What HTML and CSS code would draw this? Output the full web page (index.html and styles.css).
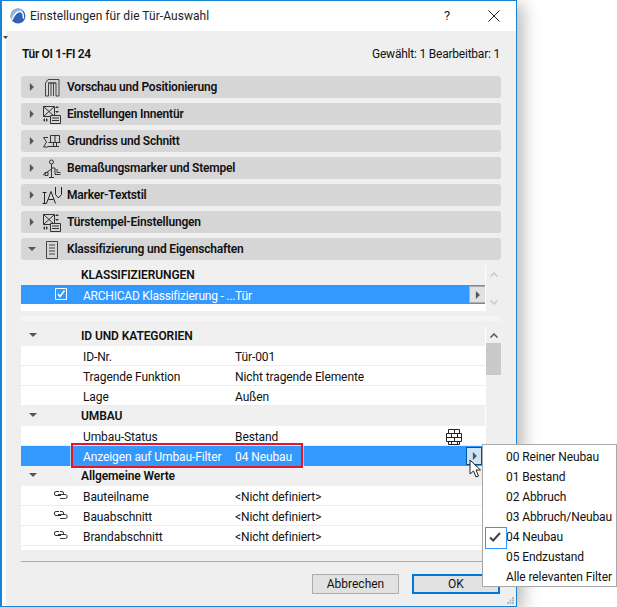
FILE: index.html
```html
<!DOCTYPE html>
<html lang="de">
<head>
<meta charset="utf-8">
<title>Einstellungen für die Tür-Auswahl</title>
<link rel="stylesheet" href="styles.css">
</head>
<body>
<svg class="defs" width="0" height="0">
  <symbol id="tri-r" viewBox="0 0 6 10"><path d="M1 0l5 5-5 5z" fill="#555"/></symbol>
  <symbol id="tri-d" viewBox="0 0 10 6"><path d="M0 0h10L5 5z" fill="#555"/></symbol>
  <symbol id="settings" viewBox="0 0 20 20"><g fill="none" stroke="#333" stroke-width="1"><path d="M1.500 1.500h11v10h-11zM1.500 1.500l11 10M12.500 1.500l-11 10"/><path d="M8.500 10.500h10v8h-10zM10 13h7M10 15.500h7" fill="#d6d6d6"/></g><path d="M15 1l2 2h-4zM15 8l2-2h-4zM1 15l2-2v4zM6 15l-2-2v4z" fill="#333"/></symbol>
  <symbol id="link" viewBox="0 0 14 8"><g fill="none" stroke="#333" stroke-width="1"><path d="M5 .5H2A1.500 1.500 0 0 0 .5 2v1A1.500 1.500 0 0 0 2 4.500h5"/><path d="M4 3.500h7A1.500 1.500 0 0 1 13 5v1a1.500 1.500 0 0 1-1.500 1.500H6"/><path d="M6 .5h2A1.500 1.500 0 0 1 9.500 2v1"/></g></symbol>
</svg>

<main class="window">
  <header class="titlebar">
    <svg class="app-logo" viewBox="0 0 16 16"><circle cx="8" cy="8" r="7.500" fill="#2f63b5"/><path d="M.5 8C1 4 4 .5 8 .5c3 0 5 1.500 6 3.500-2-1.500-5-1.500-7 .5S3 9 1.500 11.500C1 10.500.5 9.500.5 8z" fill="#8fb4e6"/><path d="M2 12c2-5 5-8.500 8-8.500 2.500 0 3.500 3 3.500 7" fill="none" stroke="#fff" stroke-width="1.500"/></svg>
    <span class="title">Einstellungen für die Tür-Auswahl</span>
    <span class="help">?</span>
    <svg class="close" viewBox="0 0 12 12"><path d="M.5.500l11 11M11.500.500l-11 11" stroke="#222" fill="none"/></svg>
  </header>
  <div class="content">
    <svg class="corner" viewBox="0 0 5 3"><path d="M0 0h5L2.500 3z" fill="#444"/></svg>
    <div class="info"><strong>Tür OI 1-FI 24</strong><span>Gewählt: 1 Bearbeitbar: 1</span></div>

    <div class="sections">
      <div class="section"><svg class="tri-r"><use href="#tri-r"/></svg>
        <svg class="sec-icon" viewBox="0 0 20 20"><g fill="none" stroke="#444"><path d="M3.500 18V5L6 1.500h11V18h-3V5H6.500V18z"/><path d="M6 5h8M9 5v13M11.500 5v13"/></g></svg>
        <span>Vorschau und Positionierung</span></div>
      <div class="section"><svg class="tri-r"><use href="#tri-r"/></svg>
        <svg class="sec-icon"><use href="#settings"/></svg>
        <span>Einstellungen Innentür</span></div>
      <div class="section"><svg class="tri-r"><use href="#tri-r"/></svg>
        <svg class="sec-icon" viewBox="0 0 20 20"><g fill="none" stroke="#333"><path d="M6 5.500H1.500L4.500 10 1.500 15H6"/><path d="M6.500 10.500h12M8.500 3.500h9v7h-9zM6 14.500h11M11.500 10.500v4M14.500 10.500v4M13 3.500v7"/></g></svg>
        <span>Grundriss und Schnitt</span></div>
      <div class="section"><svg class="tri-r"><use href="#tri-r"/></svg>
        <svg class="sec-icon" viewBox="0 0 20 20"><g fill="none" stroke="#333"><circle cx="9.500" cy="3" r="2"/><path d="M9.500 5v14M7 18.500h5M1 16l8-5.500M3 13.500h3v3H3zM9.500 9H13v6.500h5.500M15 10v3.500h3.500"/></g></svg>
        <span>Bemaßungsmarker und Stempel</span></div>
      <div class="section"><svg class="tri-r"><use href="#tri-r"/></svg>
        <svg class="sec-icon" viewBox="0 0 20 20"><g fill="none" stroke="#222"><path d="M.5 6.500h4M.5 17.500h4M2.500 6.500v11M4.500 17.500L9 5.500l4.500 12M6.500 13.500h5M13.500 1v7.500l3 3.500 3-3.500V1"/></g></svg>
        <span>Marker-Textstil</span></div>
      <div class="section"><svg class="tri-r"><use href="#tri-r"/></svg>
        <svg class="sec-icon"><use href="#settings"/></svg>
        <span>Türstempel-Einstellungen</span></div>
      <div class="section"><svg class="tri-d"><use href="#tri-d"/></svg>
        <svg class="sec-icon" viewBox="0 0 20 20"><g fill="none" stroke="#444"><path d="M4.500 1.500h11v17h-11zM7 5h6M7 8h6M7 11h6M7 14h6"/></g></svg>
        <span>Klassifizierung und Eigenschaften</span></div>
    </div>

    <div class="table table-class">
      <div class="rows">
        <div class="row head"><span class="name">KLASSIFIZIERUNGEN</span></div>
        <div class="row selected class-row">
          <span class="check-cell"><svg class="checkbox" viewBox="0 0 12 12"><path d="M.5.500h11v11H.5z" fill="none" stroke="#fff"/><path d="M3 6l2 2.500L9.500 2.500" fill="none" stroke="#fff" stroke-width="1.500"/></svg></span>
          <span class="name">ARCHICAD Klassifizierung - ...</span><span class="value">Tür</span>
          <span class="arrow-btn"><svg class="btn-tri"><use href="#tri-r"/></svg></span>
        </div>
        <div class="blank"></div>
      </div>
      <div class="scroll">
        <svg class="chev" viewBox="0 0 8 5"><path d="M.5 4.500L4 1l3.500 3.500" fill="none" stroke="#c8c8c8" stroke-width="1.500"/></svg>
        <svg class="chev chev-down" viewBox="0 0 8 5"><path d="M.5.500L4 4 7.500.500" fill="none" stroke="#c8c8c8" stroke-width="1.500"/></svg>
      </div>
    </div>

    <div class="splitter"></div>

    <div class="table table-props">
      <div class="rows">
        <div class="row head"><svg class="tri-d head-tri"><use href="#tri-d"/></svg><span class="name">ID UND KATEGORIEN</span></div>
        <div class="row"><span class="name">ID-Nr.</span><span class="value">Tür-001</span></div>
        <div class="row"><span class="name">Tragende Funktion</span><span class="value">Nicht tragende Elemente</span></div>
        <div class="row"><span class="name">Lage</span><span class="value">Außen</span></div>
        <div class="row head"><svg class="tri-d head-tri"><use href="#tri-d"/></svg><span class="name">UMBAU</span></div>
        <div class="row"><span class="name">Umbau-Status</span><span class="value">Bestand</span>
          <svg class="brick" viewBox="0 0 16 16"><path d="M2.500.500h11v4h-11zM8.500.500v4M.5 4.500h15v4H.5zM5.500 4.500v4M11.500 4.500v4M.5 8.500h15v4H.5zM8.500 8.500v4M2.500 12.500h11v3h-11zM5.500 12.500v3M11.500 12.500v3" fill="none" stroke="#222"/></svg>
        </div>
        <div class="row selected"><span class="name">Anzeigen auf Umbau-Filter</span><span class="value">04 Neubau</span>
          <span class="arrow-btn hover"><svg class="btn-tri"><use href="#tri-r"/></svg></span>
        </div>
        <div class="row head"><svg class="tri-d head-tri"><use href="#tri-d"/></svg><span class="name">Allgemeine Werte</span></div>
        <div class="row"><svg class="link"><use href="#link"/></svg><span class="name">Bauteilname</span><span class="value">&lt;Nicht definiert&gt;</span></div>
        <div class="row"><svg class="link"><use href="#link"/></svg><span class="name">Bauabschnitt</span><span class="value">&lt;Nicht definiert&gt;</span></div>
        <div class="row"><svg class="link"><use href="#link"/></svg><span class="name">Brandabschnitt</span><span class="value">&lt;Nicht definiert&gt;</span></div>
        <div class="blank small"></div>
      </div>
      <div class="scroll">
        <svg class="chev dark" viewBox="0 0 8 5"><path d="M.5 4.500L4 1l3.500 3.500" fill="none" stroke="#555" stroke-width="1.500"/></svg>
        <div class="thumb"></div>
      </div>
    </div>

    <div class="footer">
      <button class="btn">Abbrechen</button>
      <button class="btn primary">OK</button>
    </div>
    <svg class="grip" viewBox="0 0 8 8"><path d="M5 0h2v2H5zM2.500 2.500h2v2h-2zM5 2.500h2v2H5zM0 5h2v2H0zM2.500 5h2v2h-2zM5 5h2v2H5z" fill="#bbb"/></svg>
  </div>
</main>

<div class="redbox"></div>

<ul class="menu">
  <li>00 Reiner Neubau</li>
  <li>01 Bestand</li>
  <li>02 Abbruch</li>
  <li>03 Abbruch/Neubau</li>
  <li class="checked"><svg class="tick" viewBox="0 0 12 10"><path d="M1 5.500L4.200 8.500 11 1" fill="none" stroke="#444" stroke-width="2"/></svg>04 Neubau</li>
  <li>05 Endzustand</li>
  <li>Alle relevanten Filter</li>
</ul>

<svg class="cursor" viewBox="0 0 13 19"><path d="M1 1v14l3.500-3 2.500 6 2.500-1-2.500-6h4.500z" fill="#fff" stroke="#222"/></svg>
</body>
</html>
```
FILE: styles.css
```css
* { box-sizing: border-box; }
html, body { margin: 0; padding: 0; height: 100%; background: #fff; overflow: hidden; }
body { position: relative; font: 12px/20px Roboto, sans-serif; color: #111; letter-spacing: -.1px; }
.defs { position: absolute; }

.window {
  width: 517px; height: 607px;
  display: flex; flex-direction: column;
  background: #fff;
  border: 1px solid #1883d7; border-left-width: 2px;
  box-shadow: 6px 4px 16px rgba(0,0,0,.28);
}
.titlebar { height: 30px; flex: none; display: flex; align-items: center; position: relative; }
.app-logo { width: 16px; height: 16px; margin-left: 8px; }
.title { margin-left: 4px; font-size: 12px; color: #222; letter-spacing: .05px; }
.help { position: absolute; left: 442px; top: 5px; font-size: 13px; color: #222; }
.close { position: absolute; left: 486px; top: 9px; width: 12px; height: 12px; }

.content {
  flex: 1; margin-left: 4px;
  position: relative;
  background: #efefef;
  padding: 13px 15px 0 15px;
  display: flex; flex-direction: column;
}
.corner { position: absolute; left: -3px; top: 5px; width: 5px; height: 3px; }
.info { height: 20px; display: flex; justify-content: space-between; padding: 0 1px; }
.info span { letter-spacing: -.22px; }
.info strong { font-weight: 600; letter-spacing: -.35px; }
.sections { margin-top: 12px; display: flex; flex-direction: column; gap: 5px; }
.section {
  height: 22px; background: #d6d6d6; border-radius: 3px;
  display: flex; align-items: center; font-weight: 600; position: relative; letter-spacing: -.2px;
}
.section > span { position: absolute; left: 46px; }
.tri-r { width: 5px; height: 8px; margin-left: 8px; }
.tri-d { width: 8px; height: 5px; margin-left: 7px; }
.sec-icon { position: absolute; left: 21px; top: 2px; width: 20px; height: 20px; }

.table { display: flex; }
.table-class { margin-top: 5px; height: 46px; }
.table-props { height: 223px; }
.rows { width: 464px; flex: none; }
.row {
  height: 20px; padding-top: 2px;
  background: #fff; border-bottom: 1px solid #ececec;
  position: relative; display: flex; align-items: center;
}
.row.head { background: #f0f0f0; border-bottom: 0; font-weight: 600; padding-top: 0; }
.name { position: absolute; left: 62px; white-space: nowrap; }
.head .name { left: 60px; }
.value { position: absolute; left: 214px; white-space: nowrap; }
.selected { background: #3399ff; color: #fff; border-bottom: 0; }
.class-row { height: 19px; }
.class-row .name { letter-spacing: -.22px; }
.check-cell { position: absolute; left: 34px; top: 3px; }
.checkbox { display: block; width: 12px; height: 12px; }
.arrow-btn {
  position: absolute; right: 3px; top: 1px; width: 17px; height: 17px;
  background: #e1e1e1; border: 1px solid #adadad;
  display: flex; align-items: center; justify-content: center;
}
.table-class .arrow-btn { right: -1px; }
.arrow-btn.hover { background: #cce4f7; border-color: #005499; height: 18px; width: 16px; }
.btn-tri { width: 5px; height: 8px; }
.blank { height: 7px; background: #fff; }
.blank.small { height: 4px; }
.head-tri { position: absolute; left: 8px; top: 7px; margin: 0; }
.link { position: absolute; left: 33px; top: 5px; width: 14px; height: 8px; }
.brick { position: absolute; left: 425px; top: 3px; width: 16px; height: 16px; }

.scroll { width: 16px; flex: none; position: relative; border-left: 1px solid #fff; }
.chev { position: absolute; left: 4px; top: 7px; width: 8px; height: 5px; display: block; }
.chev-down { top: 35px; }
.thumb { position: absolute; left: 0; top: 17px; width: 15px; height: 32px; background: #c9c9c9; }

.splitter { margin-top: 5px; margin-bottom: 5px; height: 5px; width: 480px; background: #f5f5f5; }

.footer {
  margin-top: 12px; padding: 12px 1px 0 0; border-top: 1px solid #aaa;
  display: flex; justify-content: flex-end; gap: 13px; width: 480px;
}
.btn {
  width: 87px; height: 20px; padding: 0;
  font: 12px Roboto, sans-serif; color: #111;
  background: #e1e1e1; border: 1px solid #adadad;
}
.btn.primary { width: 88px; border: 2px solid #0078d7; }
.grip { position: absolute; right: 1px; bottom: 1px; width: 8px; height: 8px; }

.redbox {
  position: absolute; left: 71px; top: 443px; width: 232px; height: 25px;
  border: 2px solid #e8171f; outline: 1px solid rgba(255,255,255,.5);
}
.menu {
  position: absolute; left: 482px; top: 444px; width: 135px; height: 143px;
  margin: 0; padding: 2px 0 0; list-style: none;
  background: #fff; border: 1px solid #a8a8a8;
}
.menu li { height: 20px; padding-left: 23px; white-space: nowrap; position: relative; }
.checked::before {
  content: ""; position: absolute; left: 2px; top: 0; width: 20px; height: 20px;
  border: 1px solid #3399ff;
}
.tick { position: absolute; left: 6px; top: 5px; width: 12px; height: 10px; }
.cursor { position: absolute; left: 469px; top: 459px; width: 13px; height: 19px; }
```
